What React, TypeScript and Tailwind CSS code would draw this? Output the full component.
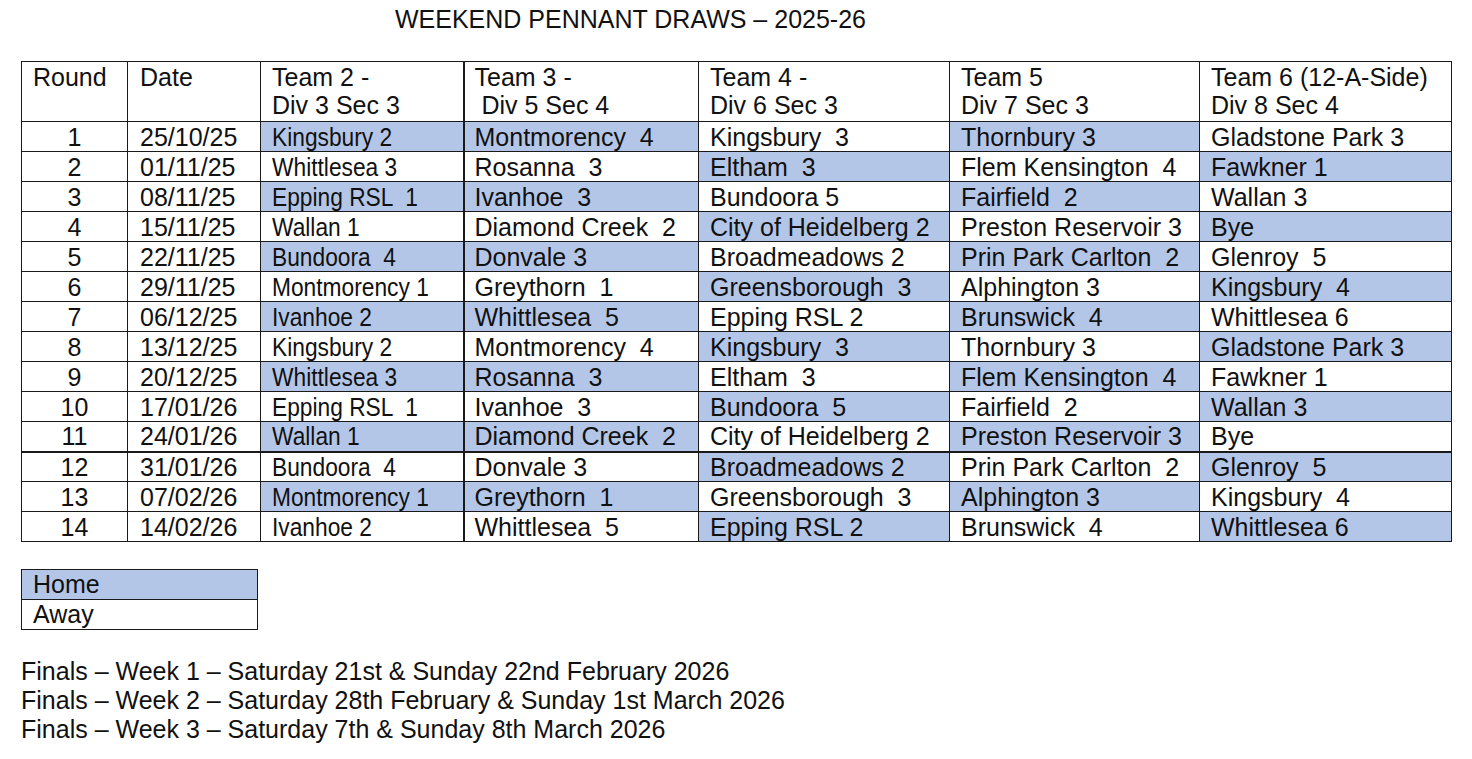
import React from "react";

type Cell = [string, boolean];

const rows: { round: number; date: string; teams: Cell[] }[] = [
  { round: 1, date: "25/10/25", teams: [["Kingsbury 2", true], ["Montmorency  4", true], ["Kingsbury  3", false], ["Thornbury 3", true], ["Gladstone Park 3", false]] },
  { round: 2, date: "01/11/25", teams: [["Whittlesea 3", false], ["Rosanna  3", false], ["Eltham  3", true], ["Flem Kensington  4", false], ["Fawkner 1", true]] },
  { round: 3, date: "08/11/25", teams: [["Epping RSL  1", true], ["Ivanhoe  3", true], ["Bundoora 5", false], ["Fairfield  2", true], ["Wallan 3", false]] },
  { round: 4, date: "15/11/25", teams: [["Wallan 1", false], ["Diamond Creek  2", false], ["City of Heidelberg 2", true], ["Preston Reservoir 3", false], ["Bye", true]] },
  { round: 5, date: "22/11/25", teams: [["Bundoora  4", true], ["Donvale 3", true], ["Broadmeadows 2", false], ["Prin Park Carlton  2", true], ["Glenroy  5", false]] },
  { round: 6, date: "29/11/25", teams: [["Montmorency 1", false], ["Greythorn  1", false], ["Greensborough  3", true], ["Alphington 3", false], ["Kingsbury  4", true]] },
  { round: 7, date: "06/12/25", teams: [["Ivanhoe 2", true], ["Whittlesea  5", true], ["Epping RSL 2", false], ["Brunswick  4", true], ["Whittlesea 6", false]] },
  { round: 8, date: "13/12/25", teams: [["Kingsbury 2", false], ["Montmorency  4", false], ["Kingsbury  3", true], ["Thornbury 3", false], ["Gladstone Park 3", true]] },
  { round: 9, date: "20/12/25", teams: [["Whittlesea 3", true], ["Rosanna  3", true], ["Eltham  3", false], ["Flem Kensington  4", true], ["Fawkner 1", false]] },
  { round: 10, date: "17/01/26", teams: [["Epping RSL  1", false], ["Ivanhoe  3", false], ["Bundoora  5", true], ["Fairfield  2", false], ["Wallan 3", true]] },
  { round: 11, date: "24/01/26", teams: [["Wallan 1", true], ["Diamond Creek  2", true], ["City of Heidelberg 2", false], ["Preston Reservoir 3", true], ["Bye", false]] },
  { round: 12, date: "31/01/26", teams: [["Bundoora  4", false], ["Donvale 3", false], ["Broadmeadows 2", true], ["Prin Park Carlton  2", false], ["Glenroy  5", true]] },
  { round: 13, date: "07/02/26", teams: [["Montmorency 1", true], ["Greythorn  1", true], ["Greensborough  3", false], ["Alphington 3", true], ["Kingsbury  4", false]] },
  { round: 14, date: "14/02/26", teams: [["Ivanhoe 2", false], ["Whittlesea  5", false], ["Epping RSL 2", true], ["Brunswick  4", false], ["Whittlesea 6", true]] },
];

const headers: [string, string][] = [
  ["Team 2 -", "Div 3 Sec 3"],
  ["Team 3 -", " Div 5 Sec 4"],
  ["Team 4 -", "Div 6 Sec 3"],
  ["Team 5", "Div 7 Sec 3"],
  ["Team 6 (12-A-Side)", "Div 8 Sec 4"],
];

const colWidths = ["w-[106px]", "w-[133px]", "w-[203px]", "w-[235px]", "w-[251px]", "w-[250px]", "w-[252px]"];

const App: React.FC = () => {
  return (
    <div className="min-h-screen bg-white text-[#111] font-['Liberation_Sans',Arial,sans-serif] pl-[21px] pt-[3px]">
      <h1 className="pl-[374px] text-[25px] leading-[32px] font-normal">
        WEEKEND PENNANT DRAWS – 2025-26
      </h1>

      <table className="mt-[26px] table-fixed border-collapse text-[25px] leading-[28px]">
        <colgroup>
          {colWidths.map((w) => (
            <col key={w} className={w} />
          ))}
        </colgroup>
        <thead>
          <tr className="h-[60px]">
            <th className="border border-[#1a1a1a] font-normal text-left align-top pl-[11px] pt-[1px]">Round</th>
            <th className="border border-[#1a1a1a] font-normal text-left align-top pl-[12px] pt-[1px]">Date</th>
            {headers.map(([a, b], i) => (
              <th
                key={a}
                className={`border border-[#1a1a1a] font-normal text-left align-top pt-[1px] whitespace-pre ${
                  i === 0 ? "border-r-2" : ""
                } ${i === 1 ? "pl-[10px]" : "pl-[11px]"}`}
              >
                <div>{a}</div>
                <div>{b}</div>
              </th>
            ))}
          </tr>
        </thead>
        <tbody>
          {rows.map((r) => (
            <tr key={r.round} className={`h-[30px] ${r.round === 12 ? "border-t-2 border-[#1a1a1a]" : ""}`}>
              <td className="border border-[#1a1a1a] text-center">{r.round}</td>
              <td className="border border-[#1a1a1a] pl-[12px]">{r.date}</td>
              {r.teams.map(([name, home], i) => (
                <td
                  key={i}
                  className={`border border-[#1a1a1a] whitespace-pre ${home ? "bg-[#b4c6e7]" : "bg-white"} ${
                    i === 0 ? "border-r-2 pl-[11px]" : i === 1 ? "pl-[10px]" : "pl-[11px]"
                  } ${r.round === 12 ? "border-t-2" : ""}`}
                >
                  {i === 0 ? <span className="inline-block origin-left scale-x-[0.91]">{name}</span> : name}
                </td>
              ))}
            </tr>
          ))}
        </tbody>
      </table>

      <div className="mt-[27px] w-[237px] border border-[#1a1a1a] text-[25px] leading-[29px]">
        <div className="bg-[#b4c6e7] pl-[11px] border-b border-[#1a1a1a]">Home</div>
        <div className="pl-[11px]">Away</div>
      </div>

      <div className="mt-[27px] text-[25px] leading-[29px]">
        <p>Finals – Week 1 – Saturday 21st &amp; Sunday 22nd February 2026</p>
        <p>Finals – Week 2 – Saturday 28th February &amp; Sunday 1st March 2026</p>
        <p>Finals – Week 3 – Saturday 7th &amp; Sunday 8th March 2026</p>
      </div>
    </div>
  );
};

export default App;
